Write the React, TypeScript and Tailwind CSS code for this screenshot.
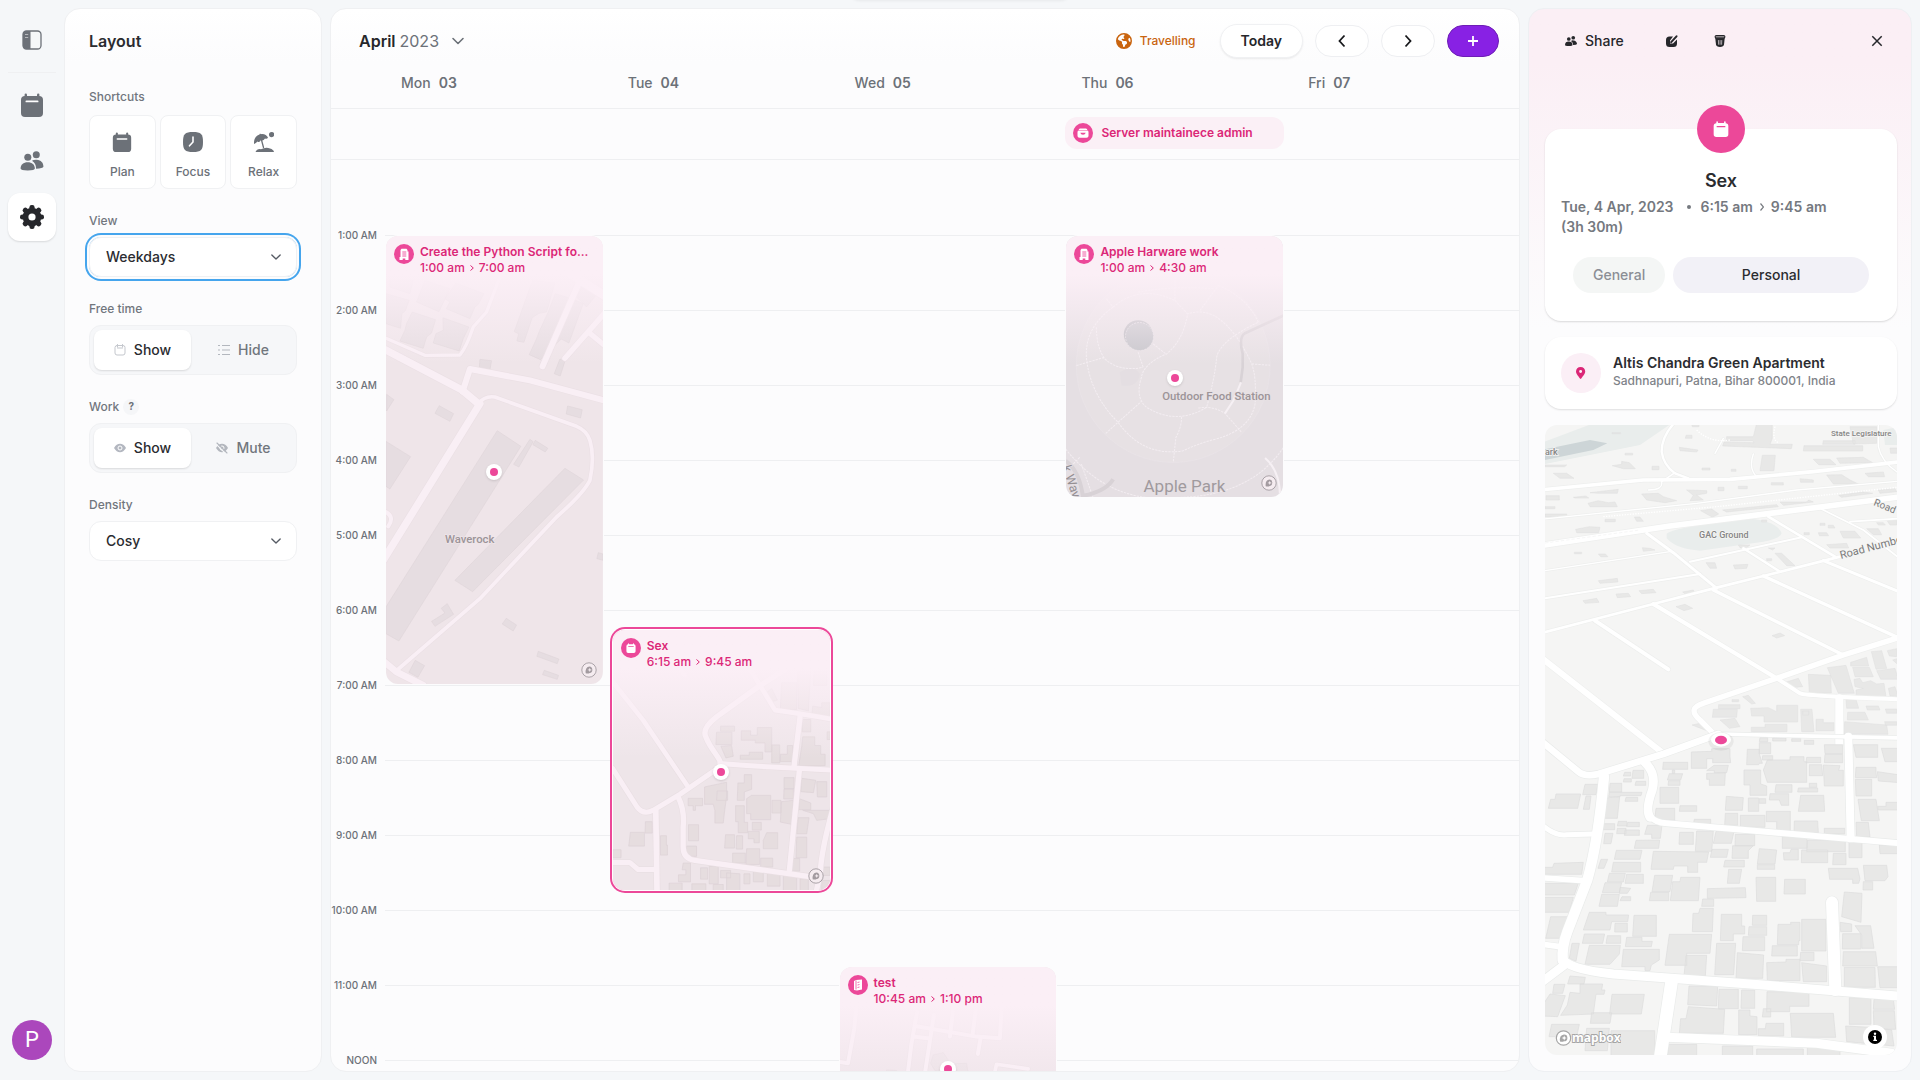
import React from "react";
import { FaEarthAmericas } from "react-icons/fa6";

type IconProps = { className?: string };

/* ---------- icons ---------- */

const CalendarIcon = ({ className }: IconProps) => (
  <svg viewBox="0 0 24 24" className={className} fill="currentColor" aria-hidden="true">
    <rect x="1" y="3" width="22" height="21" rx="4" />
    <rect x="4.6" y="0.6" width="2.4" height="5" rx="1.2" />
    <rect x="17" y="0.6" width="2.4" height="5" rx="1.2" />
    <rect x="5.5" y="7.6" width="13" height="1.7" rx="0.85" className="fill-white" />
  </svg>
);

const EventCalendarIcon = ({ className }: IconProps) => (
  <svg viewBox="0 0 24 24" className={className} fill="currentColor" aria-hidden="true">
    <path
      fillRule="evenodd"
      d="M5 3.2V1.6a1.2 1.2 0 0 1 2.4 0V3h9.2V1.600a1.200 1.200 0 0 1 2.400 0v1.600Q23 3.600 23 7.500V20q0 4-4 4H5q-4 0-4-4V7.500Q1 3.600 5 3.200ZM5.500 7.600v1.800h13V7.600Z"
    />
  </svg>
);

const CalendarOutline = ({ className }: IconProps) => (
  <svg viewBox="0 0 24 24" className={className} fill="none" stroke="currentColor" strokeWidth="2" strokeLinecap="round" aria-hidden="true">
    <rect x="2" y="3" width="20" height="19" rx="4" />
    <path d="M7 1v5M17 1v5M7 8h10" />
  </svg>
);

const PeopleIcon = ({ className }: IconProps) => (
  <svg viewBox="0 0 24 21" className={className} fill="currentColor" aria-hidden="true">
    <circle cx="7.600" cy="6.500" r="3.700" />
    <circle cx="16.500" cy="4" r="3.700" />
    <path d="M0 18.500C0 14 3 11.700 7.500 11.700S15 14 15 18.500Q15 20.500 7.500 20.500T0 18.500Z" />
    <path d="M12 10.300Q14 9 17 9.300C21.500 9.700 24 12.500 24 16.500Q23.500 18.200 16.300 18.600Q16.300 13 12 10.300Z" />
  </svg>
);

const GearIcon = ({ className }: IconProps) => (
  <svg viewBox="0 0 24 24" className={className} aria-hidden="true">
    <g fill="currentColor">
      <circle cx="12" cy="12" r="9.300" />
      {[0, 45, 90, 135, 180, 225, 270, 315].map((a) => (
        <rect key={a} x="9.400" y="0" width="5.200" height="6" rx="2.300" transform={`rotate(${a} 12 12)`} />
      ))}
    </g>
    <circle cx="12" cy="12" r="3.600" className="fill-white" />
  </svg>
);

const PanelIcon = ({ className }: IconProps) => (
  <svg viewBox="0 0 20 20" className={className} aria-hidden="true">
    <rect x="1" y="1" width="18" height="18" rx="3.500" fill="none" stroke="currentColor" strokeWidth="1.300" />
    <path d="M4 1H8.500V19H4Q1 19 1 16V4Q1 1 4 1Z" fill="currentColor" />
    <path d="M3.500 4.500h1M5.500 4.500h.6M3.500 7.500h1M5.500 7.500h.6" stroke="white" strokeWidth="1.200" />
  </svg>
);

const ClockIcon = ({ className }: IconProps) => (
  <svg viewBox="0 0 20 20" className={className} aria-hidden="true">
    <path d="M10 0C18 0 20 2 20 10S18 20 10 20S0 18 0 10S2 0 10 0Z" fill="currentColor" />
    <path d="M10 5V10L6.500 13.800" fill="none" stroke="white" strokeWidth="1.600" strokeLinecap="round" strokeLinejoin="round" />
  </svg>
);

const BeachIcon = ({ className }: IconProps) => (
  <svg viewBox="0 0 20 20" className={className} fill="currentColor" aria-hidden="true">
    <circle cx="17.600" cy="2.600" r="2.600" />
    <path d="M0 12C-.4 7 2 3.500 5.500 2.500L6 1.500L7 2.200C10 1.500 13 3.500 14 5.500Q13 7.500 11 6.500Q9 9.500 7 8Q5.500 11 3.500 9.500Q2 11 0 12Z" />
    <path d="M7.500 8L9.500 15.500" stroke="currentColor" strokeWidth="1.300" strokeLinecap="round" />
    <path d="M1.500 20Q3 16.500 7 17.200Q12 14.500 16 16.500Q19.500 17.500 20 20Z" />
  </svg>
);

const Chevron = ({ className }: IconProps) => (
  <svg viewBox="0 0 12 8" className={className} fill="none" stroke="currentColor" strokeWidth="1.600" strokeLinecap="round" strokeLinejoin="round" aria-hidden="true">
    <path d="M1 1.500L6 6.500L11 1.500" />
  </svg>
);

const ArrowIcon = ({ d }: { d: string }) => (
  <svg viewBox="0 0 16 16" className="size-4" fill="none" stroke="currentColor" strokeWidth="1.800" aria-hidden="true">
    <path d={d} />
  </svg>
);

const ListIcon = ({ className }: IconProps) => (
  <svg viewBox="0 0 12 12" className={className} stroke="currentColor" strokeWidth="1" aria-hidden="true">
    <path d="M0 1.500h2M4 1.500h8M0 6h2M4 6h8M0 10.500h2M4 10.500h8" />
  </svg>
);

const EyeIcon = ({ className, off }: IconProps & { off?: boolean }) => (
  <svg viewBox="0 0 12 12" className={className} aria-hidden="true">
    <path d="M0 6Q2.500 1.800 6 1.800T12 6Q9.500 10.200 6 10.200T0 6Z" fill="currentColor" />
    <circle cx="6" cy="6" r="2" fill="none" stroke="white" strokeWidth="1" />
    {off && <path d="M0 2L10 12" stroke="#f6f7f9" strokeWidth="1.200" />}
    {off && <path d="M1 1L11 11" stroke="currentColor" strokeWidth="1.100" strokeLinecap="round" />}
  </svg>
);

const BuildingGlyph = ({ className }: IconProps) => (
  <svg viewBox="0 0 10 12" className={className} aria-hidden="true">
    <path d="M1.500 12V2L2.500 .8H7.500L8.500 2V3.500H9.500V12H6.300V10.500H3.700V12H.5V9H1.500Z" fill="white" />
    <path d="M3.300 4h4M3.300 6h4M3.300 8h4" stroke="#ec4899" strokeWidth=".9" />
  </svg>
);

const InboxGlyph = ({ className }: IconProps) => (
  <svg viewBox="0 0 12 12" className={className} aria-hidden="true">
    <path d="M3 1.500H9Q10 1.500 10.400 3H1.600Q2 1.500 3 1.500ZM2 3.600H10Q11.500 3.600 11.500 5V9Q11.500 10.800 9.500 10.800H2.500Q.5 10.800 .5 9V5Q.5 3.600 2 3.600Z" fill="white" />
    <path d="M3.300 5.700H8.700Q8.200 7.800 6 7.800T3.300 5.700Z" fill="#ec4899" />
  </svg>
);

const BookGlyph = ({ className }: IconProps) => (
  <svg viewBox="0 0 10 12" className={className} aria-hidden="true">
    <path d="M1 2L3 1L9 0.500V10.500L4 11.500L1 11Z" fill="white" />
    <path d="M4.500 3.500L6.500 3M4.500 6L6.500 5.500M4.500 8.500L6.500 8M3 1.500V10.500" stroke="#ec4899" strokeWidth=".8" />
  </svg>
);

const EditIcon = ({ className }: IconProps) => (
  <svg viewBox="0 0 12 12" className={className} aria-hidden="true">
    <path d="M3.500 1.500H7L4 5.500V8.500H7L11 4.500V8.500Q11 12 7.500 12H3.500Q0 12 0 8.500V5Q0 1.500 3.500 1.500Z" fill="currentColor" />
    <path d="M5.200 7.200L10.500 1.300" stroke="currentColor" strokeWidth="2" strokeLinecap="round" />
  </svg>
);

const TrashIcon = ({ className }: IconProps) => (
  <svg viewBox="0 0 12 13" className={className} aria-hidden="true">
    <path d="M.8 2.500L1.600 10Q2 13 6 13T10.400 10L11.200 2.500Z" fill="currentColor" />
    <rect x=".7" y=".6" width="10.600" height="2.800" rx="1.400" fill="#8d888b" stroke="currentColor" strokeWidth="1.200" />
    <path d="M4.300 5.500L4.500 10.500M6.100 5.500V10.500M7.900 5.500L7.700 10.500" stroke="#faf0f5" strokeWidth=".7" />
  </svg>
);

const PinIcon = ({ className }: IconProps) => (
  <svg viewBox="0 0 10 13" className={className} aria-hidden="true">
    <path fillRule="evenodd" fill="currentColor" d="M5 0C8 0 10 2 10 4.800C10 8 6.500 10.500 5.700 12.500Q5 13.400 4.300 12.500C3.500 10.500 0 8 0 4.800C0 2 2 0 5 0ZM5 3.200A1.600 1.600 0 1 0 5 6.400A1.600 1.600 0 1 0 5 3.200Z" />
  </svg>
);

const MapMark = () => (
  <svg viewBox="0 0 16 16" className="size-4" aria-hidden="true">
    <circle cx="8" cy="8" r="7.200" fill="#f5ecf0" stroke="#a39ba0" strokeWidth=".9" />
    <path d="M4.700 11.300Q4 5 8.500 4.500A3.300 3.300 0 0 1 8.700 11Q7 12 4.700 11.300Z" fill="#a39ba0" />
    <path d="M8.700 5.700L9.300 7.300L10.900 7.900L9.300 8.500L8.700 10.100L8.100 8.500L6.500 7.900L8.100 7.300Z" fill="#f5ecf0" />
  </svg>
);

/* ---------- maps ---------- */

type Road = [string, number];

const Roads = ({ roads, casing, fill }: { roads: Road[]; casing: string; fill: string }) => (
  <g fill="none" strokeLinecap="round" strokeLinejoin="round">
    {roads.map(([d, w]) => (
      <path key={"c" + d} d={d} stroke={casing} strokeWidth={w + 4} />
    ))}
    {roads.map(([d, w]) => (
      <path key={"f" + d} d={d} stroke={fill} strokeWidth={w} />
    ))}
  </g>
);

const mapLabel = "font-['Roboto',sans-serif] font-medium";

const WaverockMap = () => (
  <svg viewBox="48 17 651 1344" preserveAspectRatio="xMidYMin slice" className="size-full">
    <rect x="48" y="17" width="651" height="1500" fill="#efe5e9" />
    <path
      fill="#e6dde1"
      stroke="#dcd2d6"
      strokeWidth="1.500"
      d="M382 601L453 648L87 1232L48 1210V1130ZM585 714L641 749L308 1084L255 1050ZM480 627L490 634L447 710L431 702ZM496 630L534 654L526 665L489 643ZM48 633L122 679L60 776L48 768ZM50 492L72 508L50 542ZM208 526L251 550L240 573L195 549ZM593 527L637 538L632 563L589 551ZM330 387L365 391L360 420H328ZM570 386L585 393L571 437L553 430ZM685 967L700 971V990L681 985ZM409 1164L440 1184L430 1202L397 1181ZM505 1263L567 1286L562 1300L501 1278ZM523 1320L566 1335L562 1347L518 1333ZM136 1290L164 1306L144 1341L117 1326ZM232 1120L251 1152L195 1188L185 1173L225 1148L214 1134ZM488 150L555 158L530 245L507 249L487 262L462 336L441 332L446 310L433 304ZM556 190L606 205L640 220L597 338L574 326L512 388L478 373L500 325L509 301L535 245ZM165 150L240 175L207 244L140 215ZM60 150H130L120 190L60 170ZM258 158L342 190L325 222L315 230L300 265L229 235L240 215L225 205ZM48 190L118 210L106 242L96 250L92 294L48 280ZM127 245L197 268L185 308L170 320L160 354L90 332L105 300L110 280ZM219 262L297 290L280 325L268 362L190 338L198 310L220 300ZM640 160L690 180L650 230L620 200Z"
    />
    <Roads
      casing="#ebe0e5"
      fill="#f9eff5"
      roads={[
        ["M40 355L275 478L325 520", 22],
        ["M330 520L40 990", 22],
        ["M278 484L300 416L480 450L710 512V540", 18],
        ["M325 520Q345 495 375 500L620 588Q650 600 660 630Q675 680 660 750Q640 790 560 860L330 1105L75 1325", 11],
        ["M40 320L165 375L270 374Q290 350 310 290L350 245L390 140", 10],
        ["M630 150L518 408", 18],
        ["M720 230L585 384M655 305L710 350", 16],
        ["M540 90L710 200", 26],
        ["M40 1292L80 1325L160 1365", 20],
        ["M48 845Q75 860 55 888", 12],
      ]}
    />
    <text x="225" y="937" fontSize="34" fill="#9c9498" stroke="#efe5e9" strokeWidth="4" paintOrder="stroke" className={mapLabel}>
      Waverock
    </text>
  </svg>
);

const StreetsMap = () => (
  <svg viewBox="39 30 651 780" preserveAspectRatio="xMidYMin slice" className="size-full">
    <rect x="39" y="30" width="651" height="900" fill="#eee5e9" />
    <path
      fill="#e6dddf"
      stroke="#dcd2d6"
      strokeWidth="2"
      d="M545 188H590V268H541ZM592 145L632 142L625 272L595 265ZM642 140H680V196H640ZM515 205L532 240L510 246L494 222ZM638 258L665 262V248H690V290H635ZM607 298H632V335H607ZM362 318H404V333H362ZM350 336H396V373H348ZM363 378L395 376L400 408L378 413ZM424 332H452V345H472V322H515V395H495V368H466V360H424ZM421 405H448V396H488V417H421ZM515 374H539V428H515ZM541 402H562V376H578V424H541ZM608 350H644V376H662V402H675V436H596L605 378ZM681 335H690V358H681ZM380 486V530L375 565L370 608H345V570L340 552H314V500ZM352 512H383V540H350ZM433 463H455V507L433 515V540H412L414 488H433ZM440 535L455 525H512V598H452V580H440ZM265 534H308V556H287V570H280V556H265ZM552 472H582V505H552ZM552 506H580V536H551ZM605 474L647 480L640 517L602 514ZM650 484H680V530H652ZM516 540H543V578H516ZM544 544L580 540L575 612L541 605ZM598 535L632 548V568H596ZM608 570H690V595L650 600L640 580ZM594 592H627L620 640H590ZM266 613H296V661H266ZM407 556H433V606H443V637H415V604H407ZM457 606H484V629H457ZM445 633H478V667H462V655H445ZM377 643H404V683H374ZM410 646H428V686H409ZM500 637H533V685H490V660ZM590 650H620V712H588ZM137 604H158V638H136ZM92 636H134V677H87ZM182 646H200V674H203V704H182ZM39 688H64V712H39ZM260 677H290V708H260ZM440 685H479V732H438ZM398 698H436V728H398ZM482 713H518V740H482ZM578 714H599V752H575ZM250 728H272V784H236V763H258V748H247ZM302 742H323V776H302ZM328 738H355V790H328ZM362 750H392V772H362ZM208 788H247V810H208ZM276 790H318V810H276ZM340 792H370V810H340ZM380 757L420 760V810H380ZM432 760H450V790H432ZM460 750H490V784H460ZM502 757H540V797H502ZM550 765H590V810H550ZM600 775H625V810H600ZM665 740H690V765H668ZM665 780H690V810H665Z"
    />
    <Roads
      casing="#e9dfe3"
      fill="#f9eff5"
      roads={[
        ["M39 185L130 300L265 500", 14],
        ["M39 445L112 560Q130 585 160 570L240 522L360 440", 15],
        ["M600 120L475 200L350 290Q305 325 318 350Q325 370 350 405Q365 425 362 440", 16],
        ["M440 130L525 270Q600 280 700 298", 14],
        ["M360 430L440 436L700 450", 15],
        ["M600 290L582 438M598 450L568 750", 16],
        ["M168 570L172 830", 17],
        ["M235 530Q255 570 250 620V680Q250 715 285 720L640 770", 16],
        ["M39 726H90L115 747H168", 15],
        ["M700 560Q665 680 660 760L645 830", 16],
        ["M235 140L255 165", 14],
      ]}
    />
  </svg>
);

const ParkMap = () => (
  <svg viewBox="48 17 651 780" preserveAspectRatio="xMidYMin slice" className="size-full">
    <rect x="48" y="17" width="651" height="900" fill="#e5dfe3" />
    <circle cx="370" cy="405" r="290" fill="#e7e1e4" stroke="#eae4e8" strokeWidth="2" />
    <path d="M210 425Q250 400 270 430Q265 470 215 465Z" fill="#e4dee2" />
    <circle cx="265" cy="312" r="43" fill="#bfbec3" />
    <circle cx="269" cy="318" r="42" fill="#c7c6cb" stroke="#f0eaee" strokeWidth="2" strokeDasharray="6 3" />
    <g fill="none" stroke="#f3edf1" strokeWidth="3" strokeDasharray="7 3">
      <path d="M375 150V210L413 250Q400 330 350 370Q280 400 275 440Q255 500 290 530Q380 585 470 530Q495 440 500 380Q510 330 625 275" />
      <path d="M190 230Q270 160 375 210M190 230Q105 290 110 380Q120 490 205 575Q280 680 400 660Q440 640 490 627Q600 600 615 520Q620 440 605 400Q560 300 500 260Q460 235 413 250" />
      <path d="M140 290Q140 350 165 385Q210 425 280 410M265 365L280 410M310 340L350 372M80 405L165 380M168 608L275 512M395 558Q395 590 378 620L370 695M450 240L505 165M170 205L190 230M445 532Q490 525 525 548L575 605M505 165Q590 200 625 275M265 185Q370 165 490 175M605 400L660 404" />
      <path d="M48 655Q180 820 370 800Q600 800 700 650M90 680L50 720M95 700L130 800" />
    </g>
    <path d="M700 255L585 308Q565 320 578 370V410L572 455" fill="none" stroke="#d8d2d6" strokeWidth="8" />
    <path d="M573 455L550 510L525 548M645 682Q690 720 690 800" fill="none" stroke="#f6f0f4" strokeWidth="6" />
    <path d="M48 690Q90 720 100 800M100 795Q170 780 190 745" fill="none" stroke="#d8d2d6" strokeWidth="12" />
    <text x="337" y="507" fontSize="34" fill="#9c9498" stroke="#e7e1e4" strokeWidth="4" paintOrder="stroke" className={mapLabel}>
      Outdoor Food Station
    </text>
    <text x="281" y="785" fontSize="51" fill="#a09a9e" stroke="#e5dfe3" strokeWidth="4" paintOrder="stroke" className="font-['Roboto',sans-serif]">
      Apple Park
    </text>
    <text x="38" y="708" fontSize="38" fill="#958f93" stroke="#e5dfe3" strokeWidth="4" paintOrder="stroke" transform="rotate(72 38 708)" className="font-['Roboto',sans-serif]">
      k Way
    </text>
  </svg>
);

const LanesMap = () => (
  <svg viewBox="60 81 651 580" preserveAspectRatio="xMidYMin slice" className="size-full">
    <rect x="60" y="81" width="651" height="700" fill="#eee4e9" />
    <path fill="#e9e0e4" stroke="#e0d6da" strokeWidth="1.500" d="M340 345L370 338L385 360L378 390L345 392L332 370ZM395 372L440 370L444 395H390ZM200 390L230 392V420H196Z" />
    <Roads
      casing="#e9dfe4"
      fill="#f9eff5"
      roads={[
        ["M112 165L103 265L84 370L50 365", 12],
        ["M292 215Q270 320 262 420M342 225L312 420", 12],
        ["M285 258L470 290L540 295L548 160", 12],
        ["M280 290L330 296M402 190L390 290M470 190L458 285M482 295L474 342", 12],
        ["M520 420L530 373L625 387", 11],
      ]}
    />
  </svg>
);

const FAR_ROADS: Road[] = [
  ["M30 240L340 210L600 208L850 185L1115 155", 11],
  ["M30 407L420 348L800 300L1115 260", 17],
  ["M30 328L500 280L800 240L1115 213", 4],
  ["M350 370L430 428L560 535", 9],
  ["M550 540L940 735", 10],
  ["M370 582L740 805L810 850Q830 858 1115 868", 12],
  ["M195 632L415 778", 12],
  ["M30 670L370 582L560 533L700 498L930 440", 8],
  ["M30 567L510 492M480 455L815 382", 6],
  ["M30 484L420 425", 4],
  ["M715 320L915 440", 8],
  ["M640 415L750 485", 7],
  ["M700 498L1115 688", 10],
  ["M880 452L1115 548", 9],
  ["M870 295L1000 360L1115 450M960 335L1115 325", 5],
  ["M1115 680L940 735L740 805L520 880Q470 895 510 930L565 985", 16],
  ["M928 865V1000", 24],
  ["M30 740L400 1030", 18],
  ["M432 40Q395 80 395 125Q400 165 435 190L475 205", 7],
  ["M435 188L395 215Q400 240 355 240M670 132Q655 175 680 200M1045 45V110Q1055 160 1115 195M555 130L580 85", 4],
];

const NEAR_ROADS: Road[] = [
  ["M20 22L145 125Q165 142 205 132L400 72L565 12", 20],
  ["M222 140Q205 330 172 450L112 605Q95 650 98 690", 31],
  ["M98 685Q110 718 250 732L700 765L1125 800", 27],
  ["M30 760L110 700", 26],
  ["M424 760L388 1000", 38],
  ["M410 922L860 940L1085 970", 27],
  ["M906 517L916 780", 36],
  ["M345 98Q380 130 367 180Q345 240 360 262", 26],
  ["M360 258Q375 278 410 280L1115 340", 18],
  ["M955 20L962 325", 24],
  ["M565 12L1115 24", 11],
  ["M30 280Q75 320 110 314L190 312", 15],
  ["M30 443L160 452M30 642L90 650", 17],
];

const DistrictMap = () => (
  <svg viewBox="0 0 352 630" preserveAspectRatio="xMidYMid slice" className="col-start-1 row-start-1 size-full" role="img" aria-label="Map of Altis Chandra Green Apartment">
    <rect x="-200" y="-200" width="800" height="1100" fill="#f5f5f4" />
    <g transform="translate(-15 -15) scale(0.33333)">
      <path fill="#e9edec" d="M30 100L190 40H425L330 105L30 165Z" />
      <path fill="#cdd5d7" d="M45 118L180 90L232 100L190 120L45 150Z" />
      <path fill="#e9edec" d="M1060 60L1110 50V105H1065ZM410 372Q420 355 640 325Q740 330 755 370Q750 385 700 395L510 422Q440 418 410 385Z" />
      <path
        fill="#e8e8e7"
        stroke="#dedfde"
        strokeWidth="1.500"
        d="M680 40H727V85L720 103H787L784 116L578 108L582 96L672 98L668 92H588L590 80H670ZM960 50H1040V100L970 102ZM822 107H998V123H820ZM880 92H975V103H878ZM697 136H736L732 182H690ZM850 148H900L918 164H866ZM920 144L1000 142L1028 158L930 160ZM1080 114H1105V130H1082ZM485 44H507V50H487ZM468 76H486V85H466ZM448 112L504 120L500 126L450 122ZM246 68H272V71H246ZM285 130H308V135H285ZM45 165H110L104 170H45ZM70 190H110L132 205H90ZM247 167L275 163V154L298 158L316 176H280ZM366 169H387V179H366ZM516 174H540V180H516ZM604 178H618V184H604ZM48 257H88V270H48ZM130 262L168 258L176 264H135ZM180 248L265 238L262 250H205ZM174 280L205 272L235 278L255 276L262 290H180ZM335 252L385 250L400 260L440 272L405 278L350 270ZM470 240L530 242V250L500 255L520 270L480 272L490 256ZM564 232H582V242H564ZM625 229H652V236H625ZM724 218H760V225H724ZM810 206L850 210V217H812ZM890 195L935 194L960 210L985 222H910ZM1005 190L1060 186L1064 200H1015ZM45 312H110V320H45ZM45 290H75V296H45ZM137 358L178 350L210 352L206 368H140ZM225 328H256V335H225ZM313 321H330L340 334H320ZM512 302L545 297L566 312L548 322ZM578 300L740 284L745 290L590 306ZM750 276H830L836 270L850 276L760 286ZM926 256L1000 246L1028 250L935 262ZM1045 240L1095 236L1100 245L1050 250ZM133 427H155V431H133ZM205 432H226L234 440H212ZM337 413L360 415L375 420L340 424ZM528 458H555L560 475H540ZM610 465L654 463L650 475L615 477ZM735 430H755L795 467H770ZM715 414H735L728 420ZM710 446H725V452H710ZM625 405H660L650 413H630ZM890 404L950 400L956 414H900ZM930 364H975L992 384H940ZM865 368H890L896 377H868ZM895 346H910L915 354H895ZM822 368H838V374H822ZM870 340H885V346H870ZM1040 338H1060L1066 345H1045ZM1070 330H1100V345H1080ZM1010 356H1045L1055 374H1030ZM205 512L262 505L264 516L210 520ZM258 552L295 550L302 560L262 563ZM327 542L370 538L378 548L335 551ZM159 572L200 565L207 577L165 580ZM458 546L490 540L494 550L466 552ZM438 590L465 583L488 595L462 602ZM726 677L750 669L764 677L740 684ZM695 330H710V336H695ZM1024 725L1055 722L1070 775L1038 778ZM962 757L1010 742L1016 768H962ZM968 772H1018L1030 800H975ZM892 773L948 766L973 850H925ZM835 793L902 796L904 849H838ZM1040 782L1095 775L1105 808H1052ZM1072 722L1100 716V740L1078 738ZM1088 750L1105 745V765ZM972 808L990 805L998 818L1022 812L1040 822L1062 820L1068 860L978 856V840L1000 835L975 830ZM762 818L805 805L818 830L795 832ZM1075 835L1095 830L1105 860L1080 858ZM638 860L655 856L676 880L665 882ZM606 869H626V875H606ZM566 884H630V896H565ZM550 898H622L620 922H547ZM570 930L615 925L630 950L598 955ZM662 895L715 893L740 905V886H803V936H702V918H665ZM705 943H771V965H664V952H705ZM812 898H846L852 965H815ZM858 928H880V938H912V962H858ZM818 903H836V915H818ZM948 868H978L986 895H950ZM953 907H1005L1015 930H952ZM944 935L1070 945L1074 973H942ZM1008 888H1045L1050 900H1012ZM1066 897H1100V910H1070ZM1064 935H1100V946H1066ZM486 945L510 940L545 962L538 965Z"
      />
      <Roads roads={FAR_ROADS} casing="#eeefee" fill="#ffffff" />
      <path d="M220 320L560 290L1100 232M500 60Q540 100 600 90M735 50Q725 90 745 98" fill="none" stroke="#ffffff" strokeWidth="4" strokeDasharray="4 4" />
      <path d="M45 399L330 360" stroke="#ededec" strokeWidth="1.500" strokeDasharray="10 6" />
    </g>
    <g transform="translate(-15 305) scale(0.33333)">
      <path
        fill="#e8e8e7"
        stroke="#dcdddc"
        strokeWidth="2"
        d="M78 192H152L143 235H55L62 208H75ZM165 163H204L198 194H158ZM168 198H183L178 238H160ZM240 160H275V186H238ZM238 187H336L333 197H270V200H236ZM288 202H323V214H285ZM228 204L269 200L262 265H220ZM309 121H341V145H306ZM284 127H302V138H280ZM282 146H304V156H280ZM318 154H347V166H315ZM400 97H473V118H398ZM427 120H434V130H427ZM418 131H458L452 150H412ZM416 152H450V166H414ZM390 172H446V220H390ZM450 227H500V244H448ZM378 235H434V271H374ZM484 66L545 64V56H600V80L602 98H548V86H530V115H484ZM552 106H595L590 128H553V122H530ZM530 130L586 128L584 166H538V148H530ZM688 38H722V71H688ZM652 58H688V72L697 100H688L686 104H650ZM698 77H728V90H697ZM712 90L780 90V80H822V95H830V157H712L700 120ZM642 120H692V162L710 168V196H660V165H642ZM690 23H713V35H688ZM728 24H768V33H728ZM785 26H812V34H785ZM823 31H851V43H823ZM883 44H938V71H885ZM885 73H938V98H883ZM830 82H872V98H828ZM838 104H875L878 137H838ZM880 105L930 107L926 121H940V168H883ZM738 164H786V187H735ZM838 160H860V172H838ZM805 174H863V186H803ZM720 191H776V226H754L748 210H718ZM812 196H881L884 244H805ZM589 199L640 203L637 241H586ZM655 204H686V244H655ZM688 206H707V220H688ZM709 244H781V303H740V275H709ZM586 250H623V286H584ZM631 256H705V292H631ZM493 268H542V282H490ZM793 273H863L865 308H792ZM883 295H944V312H883ZM970 44H1043V82H978ZM1054 55H1110V95H1065ZM978 112H1038V128L1040 143H976ZM1042 125L1110 135V158L1045 153ZM976 148H1025V198H978ZM984 208H1038L1048 272H994ZM1043 229H1068V217H1110V240H1045ZM978 277H1015L1020 321H980ZM221 281H254V299H219ZM265 274H290V288H262ZM293 277H328V290H290ZM262 295H288V311H260ZM285 300H328V316H283ZM225 310H249L243 341H221ZM352 286H396L391 325H365V313H344ZM318 331L389 330L386 355H313ZM449 307H490V343H447ZM500 303H550L545 364H496ZM558 304H612L604 340H550ZM616 313H674V347H615ZM608 347H670L655 362V385H606ZM546 358H595L590 382H541ZM259 361H336L330 388H253ZM250 397H332V426H245ZM213 388H233L222 415H204ZM370 364L536 366L530 397H503V427H473V408H432L430 418H363ZM585 391H643V411H581ZM596 418H635L628 460H592ZM688 356L740 360L735 402H682ZM682 404H734V418H682ZM757 320H831V355H757ZM833 330H946V365H830ZM783 358H805V390H762L760 368H780ZM815 360H893V398H814ZM910 370H948V404H908ZM957 336H996V383H957ZM1048 345H1110V371H1050ZM895 415H983L990 447L986 460H968V448H899ZM1000 406H1070L1074 440L1065 452H1005ZM1000 455H1028V480H999ZM238 430H286L280 456H232ZM290 433H340V460H285ZM225 458H275L268 488H217ZM270 472L302 475L292 490H268ZM215 493H268L262 529H207ZM276 500H302V512H270ZM374 436H428L420 485H366ZM362 487H416V512H358ZM452 442H510L505 512H421L428 455H450ZM532 476L646 473L648 503L532 505ZM518 507H551V529H515ZM678 442H737V514H680ZM764 448H826V492H762ZM178 547H228V555H296L293 575H245L240 600H160ZM255 580H292V606H254ZM312 556H379V619H308ZM510 535H550L547 605H487L489 550H506ZM574 553H635V588H644V612H610V632H571ZM668 556H710V586H667ZM657 590H710V616H655ZM815 568H888V663H815ZM744 583H782V577H810V632H806V644H742ZM163 612H224L218 640H157ZM232 617H272V640H228ZM290 622H336V634H367L364 650H286ZM178 646H271L268 672L240 703H165ZM280 658H388V690L364 705L360 722H345V710H275ZM418 613H545L540 670H470V706H405ZM468 676H530L526 738H462ZM560 640H617L611 734H554ZM622 668L701 675L698 745H618ZM639 620H704V662H637ZM727 647H802V678H725ZM812 667H852V692H810ZM710 698L768 696V688H810V752H712ZM815 698L890 708V755H820ZM943 486L996 490L993 577L935 560ZM930 577L965 582V605H932ZM938 611H992V657H937ZM975 587H1022L1032 655H995V615ZM940 665H1037L1042 708H938ZM943 712H1035L1036 772H943ZM1043 710H1110V773H1050ZM120 738L166 742L162 762H113ZM72 763H105L98 790H68ZM60 792L106 797L83 860L35 858V830ZM120 787L150 790V762H218L215 780H225L222 793H198L190 852L92 856L112 825ZM246 793H343L334 852H239ZM185 848H245L240 880H181ZM65 883H148L140 920H57ZM170 895H238L232 962H165ZM243 902H374V983H243ZM477 768H563L560 828L473 824ZM475 830L584 838L580 910H448L452 866H468ZM567 778H625V836H565ZM635 780H674V835H633ZM626 840H660V858L681 860V914H626ZM711 785H837V829H779V845H710ZM700 836H722V861H697ZM781 850H910L917 922H785ZM708 880H761V918H685V896H706ZM958 803H1023V883H958ZM1032 808H1090L1094 838H1030ZM1030 842H1093L1097 898H1032ZM947 888L1040 893L1085 900L1092 948L950 935ZM415 943H500V983H412ZM577 948H668V983H577ZM680 957H820V983H680ZM832 950H930V983H832ZM72 400L160 397L155 433H35V412H68ZM35 460H145L133 495H35ZM35 502H130L118 547H35ZM62 560H116L95 625H47ZM126 640H148L138 694L118 685Z"
      />
      <Roads roads={NEAR_ROADS} casing="#e9ebea" fill="#ffffff" />
      <ellipse cx="573" cy="34" rx="38" ry="28" fill="#000000" fillOpacity=".05" />
      <ellipse cx="573" cy="29" rx="30" ry="21" fill="#ffffff" />
      <ellipse cx="573" cy="30" rx="18" ry="13" fill="#ec4899" />
    </g>
    <g fill="#858585" stroke="#f5f5f4" strokeWidth="1.500" paintOrder="stroke" className={mapLabel}>
      <text x="286" y="11" fontSize="8">State Legislature</text>
      <text x="0" y="30" fontSize="9">ark</text>
      <text x="154" y="113" fontSize="9">GAC Ground</text>
    </g>
    <g fill="#7b7b7b" stroke="#f5f5f4" strokeWidth="1.500" paintOrder="stroke" className="font-['Roboto',sans-serif]">
      <text x="328" y="80" fontSize="10" transform="rotate(22 328 80)">Road</text>
      <text x="296" y="134" fontSize="11" transform="rotate(-15 296 134)">Road Number</text>
    </g>
  </svg>
);

/* ---------- side rail and settings ---------- */

const railButton = "flex size-12 items-center justify-center rounded-xl text-[#6c7178]";

const Rail = () => (
  <nav aria-label="Main" className="flex w-16 shrink-0 flex-col items-center pt-2">
    <button type="button" aria-label="Toggle panel" className={railButton}>
      <PanelIcon className="size-5" />
    </button>
    <div className="mt-2 mb-2 h-px w-12 bg-[#eff0f2]" />
    <div className="flex flex-col gap-2">
      <button type="button" aria-label="Calendar" className={railButton}>
        <CalendarIcon className="size-6" />
      </button>
      <button type="button" aria-label="People" className={railButton}>
        <PeopleIcon className="h-5 w-6" />
      </button>
      <button type="button" aria-label="Settings" className="flex size-12 items-center justify-center rounded-xl bg-white text-[#26272b] shadow-[0_1px_2px_rgba(0,0,0,0.12)]">
        <GearIcon className="size-6" />
      </button>
    </div>
    <button type="button" aria-label="Profile" className="mt-auto mb-3 flex size-10 items-center justify-center rounded-full bg-[#ab47bc] font-['Roboto',sans-serif] text-[22px] leading-6 text-white">
      P
    </button>
  </nav>
);

const fieldLabel = "text-xs font-medium text-[#71767d]";

const SelectField = ({ id, label, options, focused }: { id: string; label: string; options: string[]; focused?: boolean }) => (
  <div className="flex flex-col gap-2">
    <label htmlFor={id} className={fieldLabel}>
      {label}
    </label>
    <div
      className={
        focused
          ? "grid items-center rounded-xl ring-2 ring-[#45a5ed] ring-offset-2 ring-offset-[#fcfcfd]"
          : "grid items-center rounded-xl"
      }
    >
      <select id={id} className="col-start-1 row-start-1 h-10 w-full appearance-none rounded-xl border border-[#f0f1f3] bg-white px-4 text-sm font-medium text-[#2b2c30] outline-none">
        {options.map((o) => (
          <option key={o}>{o}</option>
        ))}
      </select>
      <Chevron className="pointer-events-none col-start-1 row-start-1 mr-4 h-2 w-[10px] justify-self-end text-[#565b64]" />
    </div>
  </div>
);

const ToggleField = ({
  name,
  label,
  help,
  options,
}: {
  name: string;
  label: string;
  help?: boolean;
  options: { text: string; icon: React.ReactNode }[];
}) => (
  <fieldset>
    <legend className="mb-2 flex h-4 items-center gap-1 text-xs font-medium text-[#71767d]">
      {label}
      {help && (
        <button type="button" aria-label="About work events" className="flex size-4 items-center justify-center rounded-full bg-[#f5f6f8] text-[10px] font-bold text-[#6c7178]">
          ?
        </button>
      )}
    </legend>
    <div className="grid grid-cols-2 gap-1 rounded-xl border border-[#f0f1f3] bg-[#f6f7f9] p-1">
      {options.map((o, i) => (
        <label
          key={o.text}
          className="flex h-10 cursor-pointer items-center justify-center gap-2 rounded-lg text-sm font-medium text-[#71767d] has-checked:bg-white has-checked:text-[#2b2c30] has-checked:shadow-[0_1px_2px_rgba(0,0,0,0.12)]"
        >
          <input type="radio" name={name} defaultChecked={i === 0} className="sr-only" />
          {o.icon}
          {o.text}
        </label>
      ))}
    </div>
  </fieldset>
);

const shortcuts = [
  { text: "Plan", icon: <CalendarIcon className="size-5" /> },
  { text: "Focus", icon: <ClockIcon className="size-5" /> },
  { text: "Relax", icon: <BeachIcon className="size-5" /> },
];

const SettingsPanel = () => (
  <aside className="w-[258px] shrink-0 rounded-2xl border border-[#eff0f2] bg-linear-to-b from-white to-[#fcfcfd] to-5% px-6">
    <h2 className="pt-5 pb-9 text-base font-semibold text-[#2b2c30]">Layout</h2>
    <div className="flex flex-col gap-6">
      <section>
        <h3 className={fieldLabel}>Shortcuts</h3>
        <div className="mt-[10px] grid grid-cols-3 gap-1">
          {shortcuts.map((s) => (
            <button key={s.text} type="button" className="flex h-[74px] flex-col items-center gap-3 rounded-lg border border-[#f0f1f3] bg-white pt-4 text-xs font-medium text-[#6c7178]">
              {s.icon}
              {s.text}
            </button>
          ))}
        </div>
      </section>
      <SelectField id="view" label="View" options={["Weekdays", "Day", "Week", "Month"]} focused />
      <ToggleField
        name="free"
        label="Free time"
        options={[
          { text: "Show", icon: <CalendarOutline className="size-3 text-[#c4c7cd]" /> },
          { text: "Hide", icon: <ListIcon className="size-3 text-[#b3b7be]" /> },
        ]}
      />
      <ToggleField
        name="work"
        label="Work"
        help
        options={[
          { text: "Show", icon: <EyeIcon className="size-3 text-[#b3b7c0]" /> },
          { text: "Mute", icon: <EyeIcon off className="size-3 text-[#b3b7be]" /> },
        ]}
      />
      <SelectField id="density" label="Density" options={["Cosy", "Compact"]} />
    </div>
  </aside>
);

/* ---------- calendar ---------- */

const HOUR = 75;

type CalEvent = {
  title: string;
  from: string;
  to: string;
  start: number;
  end: number;
  icon: React.ReactNode;
  map: React.ReactNode;
  selected?: boolean;
};

const days: { name: string; date: string; event?: CalEvent; allDay?: string }[] = [
  {
    name: "Mon",
    date: "03",
    event: { title: "Create the Python Script fo...", from: "1:00 am", to: "7:00 am", start: 1, end: 7, icon: <BuildingGlyph className="h-3" />, map: <WaverockMap /> },
  },
  {
    name: "Tue",
    date: "04",
    event: { title: "Sex", from: "6:15 am", to: "9:45 am", start: 6.25, end: 9.75, icon: <EventCalendarIcon className="size-[10px]" />, map: <StreetsMap />, selected: true },
  },
  {
    name: "Wed",
    date: "05",
    event: { title: "test", from: "10:45 am", to: "1:10 pm", start: 10.75, end: 13.17, icon: <BookGlyph className="h-3" />, map: <LanesMap /> },
  },
  {
    name: "Thu",
    date: "06",
    allDay: "Server maintainece admin",
    event: { title: "Apple Harware work", from: "1:00 am", to: "4:30 am", start: 1, end: 4.5, icon: <BuildingGlyph className="h-3" />, map: <ParkMap /> },
  },
  { name: "Fri", date: "07" },
];

const hours = ["", "1:00 AM", "2:00 AM", "3:00 AM", "4:00 AM", "5:00 AM", "6:00 AM", "7:00 AM", "8:00 AM", "9:00 AM", "10:00 AM", "11:00 AM", "NOON"];

const EventCard = ({ event }: { event: CalEvent }) => (
  <article
    className={
      event.selected
        ? "mr-[9px] ml-px grid overflow-hidden rounded-xl ring-2 ring-[#ec4899] ring-offset-1 ring-offset-white"
        : "mr-[9px] ml-px grid overflow-hidden rounded-xl ring-1 ring-[#fcfcfd]"
    }
    style={{ marginTop: event.start * HOUR + 1, height: (event.end - event.start) * HOUR - 2 }}
  >
    <div className="col-start-1 row-start-1 min-h-0 overflow-hidden">{event.map}</div>
    <div className="col-start-1 row-start-1 h-32 bg-linear-to-b from-[#fbeff6] from-30% to-[#fbeff6]/0" />
    <div className="z-10 col-start-1 row-start-1 mt-6 flex size-4 items-center justify-center self-center justify-self-center rounded-full bg-white shadow-sm">
      <span className="size-2 rounded-full bg-[#ec4899]" />
    </div>
    <div className="z-10 col-start-1 row-start-1 mr-[6px] mb-[6px] self-end justify-self-end">
      <MapMark />
    </div>
    <header className="z-10 col-start-1 row-start-1 flex min-w-0 gap-[6px] self-start p-2 pr-3 text-xs text-[#db2777]">
      <span className="flex size-5 shrink-0 items-center justify-center rounded-full bg-[#ec4899] text-white">{event.icon}</span>
      <div className="min-w-0">
        <h3 className="whitespace-nowrap font-semibold">{event.title}</h3>
        <p className="flex items-center gap-[5px] font-medium">
          {event.from}
          <svg viewBox="0 0 4 8" className="h-2 w-1" fill="none" stroke="currentColor" aria-hidden="true">
            <path d="M.5 1.500L3.300 4L.5 6.500" />
          </svg>
          {event.to}
        </p>
      </div>
    </header>
  </article>
);

const roundButton = "flex h-8 items-center justify-center rounded-full border";

const Calendar = () => (
  <main className="flex min-w-0 flex-1 flex-col overflow-hidden rounded-2xl border border-[#eff0f2] bg-linear-to-b from-white to-[#fcfcfd] to-5%">
    <div className="flex h-16 shrink-0 items-center justify-between pr-5 pl-7">
      <button type="button" className="flex items-center text-base text-[#6c7178]">
        <strong className="mr-1 font-semibold text-[#26272b]">April</strong> 2023
        <Chevron className="ml-3 h-2 w-[14px]" />
      </button>
      <div className="flex items-center gap-3">
        <button type="button" className="mr-3 flex items-center gap-2 text-xs font-medium text-[#c9640f]">
          <FaEarthAmericas className="size-4" />
          Travelling
        </button>
        <button type="button" className="h-[34px] rounded-full border border-[#f0f1f3] bg-white px-5 text-sm font-semibold text-[#26272b] shadow-[0_1px_2px_rgba(0,0,0,0.08)]">
          Today
        </button>
        <button type="button" aria-label="Previous week" className={roundButton + " w-[54px] border-[#eeeff2] bg-white text-[#18191c]"}>
          <ArrowIcon d="M10.500 2.500L5.500 8L10.500 13.500" />
        </button>
        <button type="button" aria-label="Next week" className={roundButton + " w-[54px] border-[#eeeff2] bg-white text-[#18191c]"}>
          <ArrowIcon d="M5.500 2.500L10.500 8L5.500 13.500" />
        </button>
        <button type="button" aria-label="New event" className={roundButton + " w-[52px] border-[#6d1db5] bg-[#8821e4] text-white"}>
          <ArrowIcon d="M8 3V13M3 8H13" />
        </button>
      </div>
    </div>

    <div className="grid shrink-0 grid-cols-5 border-b border-[#eeeff1] pb-[15px] pl-[54px] text-sm text-[#6c7178]">
      {days.map((d) => (
        <h3 key={d.name} className="flex gap-2 pl-4 font-medium">
          {d.name} <span className="font-semibold">{d.date}</span>
        </h3>
      ))}
    </div>

    <div className="grid h-[51px] shrink-0 grid-cols-5 border-b border-[#eeeff1] pt-2 pl-[54px]">
      {days.map((d) => (
        <div key={d.name} className="pr-2">
          {d.allDay && (
            <button type="button" className="flex h-8 w-full items-center gap-2 rounded-xl bg-[#fbf0f6] px-2 text-xs font-semibold text-[#db2777]">
              <span className="flex size-5 items-center justify-center rounded-full bg-[#ec4899]">
                <InboxGlyph className="size-3" />
              </span>
              {d.allDay}
            </button>
          )}
        </div>
      ))}
    </div>

    <div className="grid min-h-0 flex-1 content-start overflow-hidden">
      <ol className="col-start-1 row-start-1">
        {hours.map((h) => (
          <li key={h} className="flex h-[75px] text-[10px] leading-4 font-medium text-[#6c7178]">
            <span className="-mt-2 mr-2 flex w-[46px] shrink-0 justify-end whitespace-nowrap">{h}</span>
            <span className={h ? "flex-1 border-t border-[#eeeff1]" : "flex-1"} />
          </li>
        ))}
      </ol>
      <div className="col-start-1 row-start-1 grid h-0 grid-cols-5 items-start pl-[54px]">
        {days.map((d) => (
          <div key={d.name} className="flow-root min-w-0">
            {d.event && <EventCard event={d.event} />}
          </div>
        ))}
      </div>
    </div>
  </main>
);

/* ---------- details ---------- */

const DetailsPanel = () => (
  <aside className="flex w-96 shrink-0 flex-col rounded-2xl border border-[#eef0f3] bg-linear-to-b from-[#fbeff5] from-5% to-[#fcfcfd] to-30% pr-[14px] pb-4 pl-4">
    <div className="flex h-16 shrink-0 items-center pr-3 pl-5 text-[#26272b]">
      <button type="button" className="flex items-center gap-2 text-sm font-medium">
        <PeopleIcon className="h-3 w-3" />
        Share
      </button>
      <button type="button" aria-label="Edit" className="ml-9 flex size-6 items-center justify-center">
        <EditIcon className="size-3" />
      </button>
      <button type="button" aria-label="Delete" className="ml-6 flex size-6 items-center justify-center">
        <TrashIcon className="h-3 w-3" />
      </button>
      <button type="button" aria-label="Close" className="-mr-1 ml-auto flex size-6 items-center justify-center">
        <svg viewBox="0 0 12 12" className="size-3" stroke="currentColor" strokeWidth="1.500" aria-hidden="true">
          <path d="M1.300 1.300L10.700 10.700M10.700 1.300L1.300 10.700" />
        </svg>
      </button>
    </div>

    <section className="mt-14 shrink-0 rounded-2xl bg-white px-4 pb-7 shadow-[0_1px_2px_rgba(0,0,0,0.14)]">
      <div className="mx-auto -mt-6 flex size-12 items-center justify-center rounded-full bg-[#ec4899] text-white">
        <EventCalendarIcon className="size-4" />
      </div>
      <h2 className="mt-[14px] text-center text-lg leading-7 font-semibold text-[#2b2c30]">Sex</h2>
      <p className="mt-[2px] flex flex-wrap items-center text-sm font-semibold text-[#75797f]">
        <span>Tue, 4 Apr, 2023</span>
        <span className="mr-[10px] ml-[13px] size-1 rounded-full bg-[#75797f]" />
        <span>6:15 am</span>
        <svg viewBox="0 0 4 8" className="mx-[7px] h-2 w-1" fill="none" stroke="currentColor" strokeWidth="1.200" aria-hidden="true">
          <path d="M.5 .5L3.500 4L.5 7.500" />
        </svg>
        <span>9:45 am</span>
        <span className="basis-full">(3h 30m)</span>
      </p>
      <div className="mx-3 mt-5 flex gap-2 text-sm font-medium">
        <button type="button" className="h-9 rounded-full bg-[#f4f6f5] px-5 text-[#8b8e95]">
          General
        </button>
        <button type="button" className="h-9 flex-1 rounded-full bg-[#f2f1f7] text-[#2b2c30]">
          Personal
        </button>
      </div>
    </section>

    <section className="mt-4 flex shrink-0 gap-3 rounded-2xl bg-white p-4 shadow-[0_1px_2px_rgba(0,0,0,0.12)]">
      <span className="flex size-10 items-center justify-center rounded-full bg-[#fbeff6] text-[#db2777]">
        <PinIcon className="h-3" />
      </span>
      <div>
        <h3 className="text-sm font-semibold text-[#2b2c30]">Altis Chandra Green Apartment</h3>
        <p className="text-xs font-medium text-[#808389]">Sadhnapuri, Patna, Bihar 800001, India</p>
      </div>
    </section>

    <section className="mt-4 grid min-h-0 flex-1 grid-rows-[minmax(0,1fr)] overflow-hidden rounded-xl">
      <DistrictMap />
      <a href="#mapbox" aria-label="mapbox" className="col-start-1 row-start-1 mb-2 ml-[10px] self-end justify-self-start">
        <svg viewBox="0 0 66 18" className="h-[18px] w-[66px]" aria-hidden="true">
          <circle cx="8.500" cy="9" r="7.200" fill="white" stroke="#a6a6a6" strokeWidth="1.200" />
          <path d="M5 12.500Q4 6 9 5.500A3.400 3.400 0 0 1 9 12.300Q7 13.300 5 12.500Z" fill="#a6a6a6" />
          <path d="M9.200 6.600L9.900 8.300L11.600 9L9.900 9.700L9.200 11.400L8.500 9.700L6.800 9L8.500 8.300Z" fill="white" />
          <text x="17" y="13" fontSize="12" fill="white" stroke="#a6a6a6" strokeWidth="1.800" paintOrder="stroke" className="font-['Open_Sans',sans-serif] font-bold">
            mapbox
          </text>
        </svg>
      </a>
      <button type="button" aria-label="Map attribution" className="col-start-1 row-start-1 mr-[10px] mb-[6px] flex size-6 items-center justify-center self-end justify-self-end rounded-full bg-white">
        <svg viewBox="0 0 14 14" className="size-[14px]" aria-hidden="true">
          <circle cx="7" cy="7" r="7" fill="black" />
          <circle cx="7" cy="3.700" r="1.200" fill="white" />
          <path d="M5.300 5.800H8V9.800H9V11H5.300V9.800H6V7H5.300Z" fill="white" />
        </svg>
      </button>
    </section>
  </aside>
);

export default function App() {
  return (
    <div className="relative flex h-screen overflow-hidden bg-[#f5f7f9] py-2 pr-2 font-['Inter',sans-serif]">
      <div className="absolute -top-10 left-1/2 h-10 w-56 -translate-x-1/2 rounded-xl shadow-[0_1px_3px_rgba(0,0,0,0.06)]" />
      <Rail />
      <div className="flex min-w-0 flex-1 gap-2">
        <SettingsPanel />
        <Calendar />
        <DetailsPanel />
      </div>
    </div>
  );
}
